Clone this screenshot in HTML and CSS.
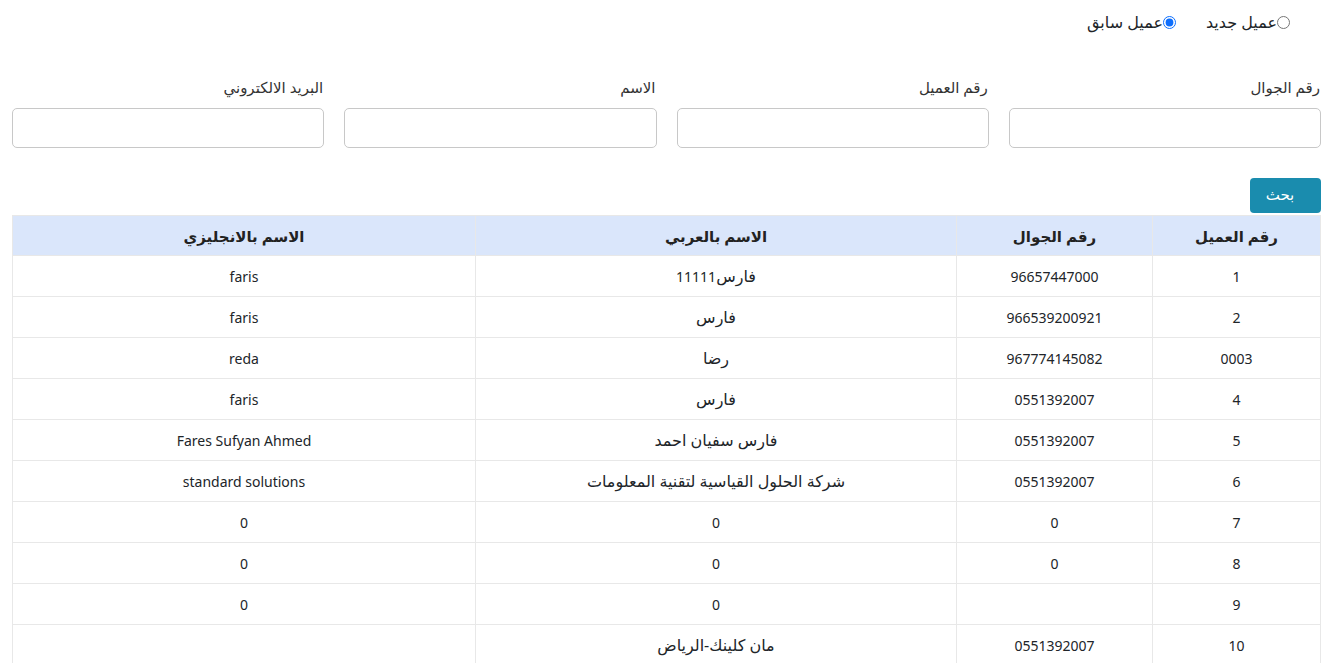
FILE: index.html
```html
<!DOCTYPE html>
<html lang="ar" dir="rtl">
<head>
<meta charset="utf-8">
<link rel="stylesheet" href="styles.css">
</head>
<body>
<div class="page">
  <div class="radios">
    <label class="radio"><input type="radio" name="t">عميل جديد</label>
    <label class="radio"><input type="radio" name="t" checked>عميل سابق</label>
  </div>
  <div class="fields">
    <div class="field"><label>رقم الجوال</label><input type="text"></div>
    <div class="field"><label>رقم العميل</label><input type="text"></div>
    <div class="field"><label>الاسم</label><input type="text"></div>
    <div class="field"><label>البريد الالكتروني</label><input type="text"></div>
  </div>
  <div class="actions"><button class="btn">بحث</button></div>
  <table class="grid">
    <thead>
      <tr><th class="c1">رقم العميل</th><th class="c2">رقم الجوال</th><th class="c3">الاسم بالعربي</th><th>الاسم بالانجليزي</th></tr>
    </thead>
    <tbody>
      <tr><td>1</td><td>96657447000</td><td><span class="ar">فارس</span>11111</td><td>faris</td></tr>
      <tr><td>2</td><td>966539200921</td><td class="ar">فارس</td><td>faris</td></tr>
      <tr><td>0003</td><td>967774145082</td><td class="ar">رضا</td><td>reda</td></tr>
      <tr><td>4</td><td>0551392007</td><td class="ar">فارس</td><td>faris</td></tr>
      <tr><td>5</td><td>0551392007</td><td class="ar">فارس سفيان احمد</td><td>Fares Sufyan Ahmed</td></tr>
      <tr><td>6</td><td>0551392007</td><td class="ar">شركة الحلول القياسية لتقنية المعلومات</td><td>standard solutions</td></tr>
      <tr><td>7</td><td>0</td><td>0</td><td>0</td></tr>
      <tr><td>8</td><td>0</td><td>0</td><td>0</td></tr>
      <tr><td>9</td><td></td><td>0</td><td>0</td></tr>
      <tr><td>10</td><td>0551392007</td><td class="ar">مان كلينك-الرياض</td><td></td></tr>
    </tbody>
  </table>
</div>
</body>
</html>
```
FILE: styles.css
```css
html, body {
  margin: 0;
  padding: 0;
  background: #fff;
}
body {
  font-family: "Noto Sans", "Open Sans", "DejaVu Sans", sans-serif;
  font-size: 14px;
  color: #212529;
}
.page {
  padding: 0 15px 0 15px;
  margin-left: -3px;
}
.radios {
  display: flex;
  gap: 30px;
  padding: 10px 31px 0 0;
  height: 40px;
  font-size: 16px;
}
.radio {
  display: flex;
  align-items: center;
  height: 24px;
}
.radio input {
  margin: 0;
  width: 13px;
  height: 13px;
  accent-color: #0d6efd;
}
.fields {
  display: grid;
  grid-template-columns: repeat(4, 1fr);
  gap: 20px;
  margin-top: 26px;
}
.field {
  display: flex;
  flex-direction: column;
}
.field label {
  font-size: 15px;
  height: 22px;
  line-height: 22px;
  margin-bottom: 10px;
  padding-right: 1px;
  color: #333;
}
.field input {
  height: 40px;
  box-sizing: border-box;
  border: 1px solid #c8c8c8;
  border-radius: 5px;
  background: #fff;
  font: inherit;
}
.actions {
  margin-top: 30px;
  display: flex;
}
.btn {
  width: 71px;
  height: 35px;
  background: #1a8cae;
  color: #fff;
  border: none;
  border-radius: 4px;
  font-family: inherit;
  font-size: 15px;
  font-weight: normal;
  padding: 0 11px 4px 0;
}
.grid {
  margin-top: 2px;
  width: 100%;
  border-collapse: collapse;
  table-layout: fixed;
}
.grid th, .grid td {
  border: 1px solid #e8e8e8;
  text-align: center;
  height: 40px;
  padding: 0;
}
.grid th {
  height: 39px;
  background: #dae6fb;
  font-weight: bold;
  font-size: 15px;
  color: #222;
}
.grid td {
  font-size: 14px;
}
.grid .ar {
  font-size: 16px;
}
.c1 { width: 167px; }
.c2 { width: 195px; }
.c3 { width: 480px; }
```
